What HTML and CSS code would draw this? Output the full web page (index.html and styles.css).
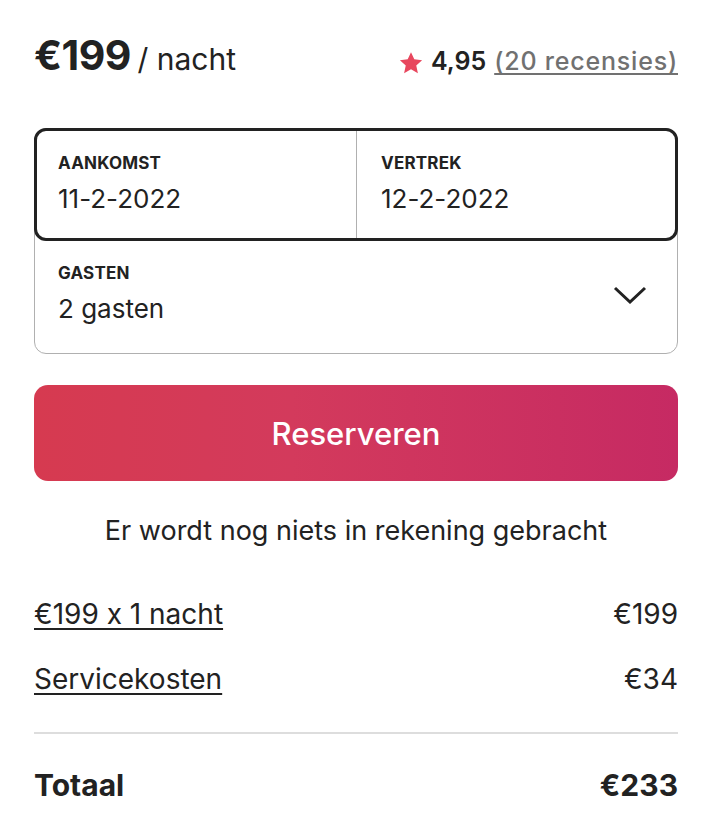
FILE: index.html
```html
<!DOCTYPE html>
<html lang="nl">
<head>
<meta charset="utf-8">
<link rel="stylesheet" href="styles.css">
</head>
<body>
<div class="card">
  <div class="head">
    <div class="price"><span class="amount">€199</span> <span class="per">/ nacht</span></div>
    <div class="rating">
      <svg class="star" viewBox="0 0 32 32" width="24" height="24"><path fill="#e8475e" d="M16 1.5l4.4 9.6 10.4 1.1-7.8 7.1 2.2 10.3L16 24.3l-9.2 5.3 2.2-10.3-7.8-7.1 10.4-1.1z"/></svg>
      <span class="score">4,95</span>
      <span class="reviews">(20 recensies)</span>
    </div>
  </div>

  <div class="picker">
    <div class="dates">
      <div class="cell">
        <div class="label">Aankomst</div>
        <div class="value">11-2-2022</div>
      </div>
      <div class="cell right">
        <div class="label">Vertrek</div>
        <div class="value">12-2-2022</div>
      </div>
    </div>
    <div class="guests">
      <div>
        <div class="label">Gasten</div>
        <div class="value">2 gasten</div>
      </div>
      <svg class="chev" viewBox="0 0 34 18" width="34" height="18"><path d="M2 2l15 14L32 2" fill="none" stroke="#222" stroke-width="3"/></svg>
    </div>
  </div>

  <button class="reserve">Reserveren</button>

  <p class="note">Er wordt nog niets in rekening gebracht</p>

  <div class="line"><span class="link">€199 x 1 nacht</span><span>€199</span></div>
  <div class="line"><span class="link">Servicekosten</span><span>€34</span></div>
  <div class="sep"></div>
  <div class="line total"><span>Totaal</span><span>€233</span></div>
</div>
</body>
</html>
```
FILE: styles.css
```css
* { box-sizing: border-box; }
html, body { margin: 0; background: #fff; }
body { font-family: "Inter", "Noto Sans", sans-serif; color: #222; font-feature-settings: "calt" 0; }
.card { padding: 30px 34px 0 34px; }
.head { display: flex; justify-content: space-between; align-items: baseline; }
.amount { font-size: 41px; font-weight: 700; letter-spacing: -0.5px; }
.per { font-size: 30px; font-weight: 400; margin-left: 2px; }
.rating { display: flex; align-items: baseline; gap: 8px; font-size: 25px; }
.star { align-self: center; position: relative; top: 2px; }
.score { font-weight: 600; }
.reviews { color: #717171; text-decoration: underline; text-underline-offset: 3px; font-weight: 500; letter-spacing: 0.8px; }

.picker { margin-top: 48px; border: 1px solid #b0b0b0; border-radius: 12px; }
.dates { margin: -1px; display: grid; grid-template-columns: 1fr 1fr; border: 3px solid #222; border-radius: 12px; height: 113px; }
.cell { padding: 20px 22px 0 21px; }
.cell.right { border-left: 1px solid #b0b0b0; padding-left: 24px; }
.label { font-size: 17px; font-weight: 700; text-transform: uppercase; letter-spacing: 0.2px; line-height: 24px; }
.value { font-size: 26px; line-height: 34px; margin-top: 7px; }
.guests { display: flex; justify-content: space-between; align-items: center; padding: 21px 30px 27px 23px; }
.chev { margin-top: 2px; }

.reserve { display: block; width: 100%; margin-top: 31px; height: 96px; border: 0; border-radius: 14px; background: linear-gradient(90deg, #d63a50 0%, #d33a5c 40%, #c62a63 100%); color: #fff; font-family: inherit; font-size: 31px; font-weight: 500; }
.note { text-align: center; font-size: 27px; margin: 32px 0 0; line-height: 36px; }

.line { display: flex; justify-content: space-between; font-size: 28px; line-height: 38px; margin-top: 46px; }
.line + .line { margin-top: 27px; }
.link { text-decoration: underline; text-underline-offset: 4px; text-decoration-thickness: 2px; }
.sep { height: 2px; background: #ddd; margin-top: 34px; }
.line.total { margin-top: 32px; font-weight: 700; font-size: 30px; }
```
